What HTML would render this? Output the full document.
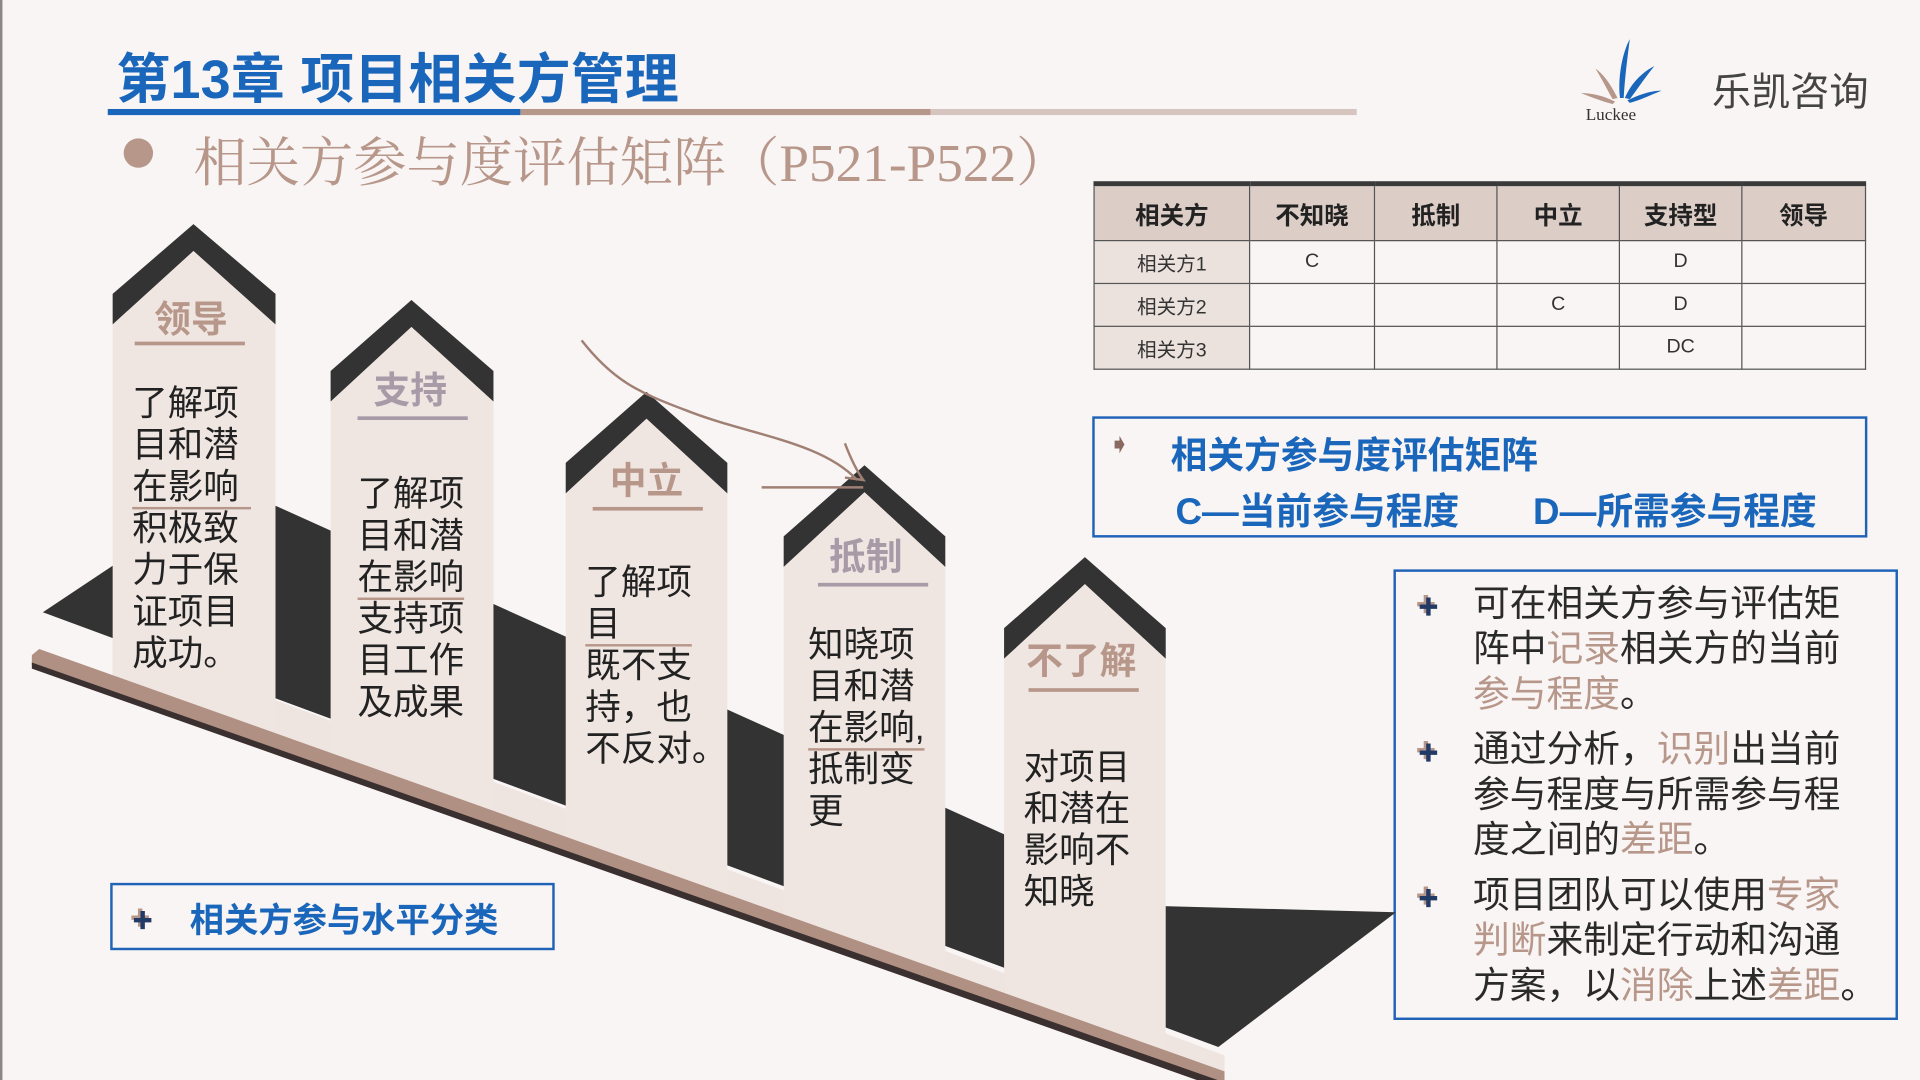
<!DOCTYPE html>
<html><head><meta charset="utf-8">
<style>
html,body{margin:0;padding:0;width:1920px;height:1080px;overflow:hidden;background:#f9f5f4;}
#s{position:absolute;left:0;top:0;width:1568px;height:882px;overflow:hidden;transform:scale(1.22449);transform-origin:0 0;font-family:"Liberation Sans","Noto Sans CJK SC",sans-serif;}
.a{position:absolute;white-space:nowrap;}
.title{left:95px;top:29px;font-size:44px;font-weight:bold;color:#1a66bb;letter-spacing:0.2px;}
.sub{left:158px;top:99px;font-size:43.5px;color:#b8978b;font-family:"Liberation Serif","Noto Serif CJK SC",serif;}
table{position:absolute;left:893px;top:148px;border-collapse:collapse;font-size:16px;color:#333;table-layout:fixed;width:630px;}
td{border:1px solid #555;text-align:center;height:34px;padding:0;}
tr.h td{height:44px;font-weight:bold;font-size:20px;background:#dccdc6;color:#222;border-top:4px solid #3a3a3a;}
td.f{background:#ece2dd;}
.box{position:absolute;border:2px solid #1f62b8;}
.blue{color:#1a66bb;font-weight:bold;}
.pt{position:absolute;font-size:29px;line-height:34px;color:#222;}
.lab{position:absolute;font-size:30px;font-weight:bold;color:#b8978b;}
.ul{position:absolute;height:3px;background:#b8978b;}
.rt{position:absolute;font-size:30px;line-height:37px;color:#2a2a2a;left:1203px;width:330px;}
.rt span{color:#b8978b;}
.ic{position:absolute;font-size:17px;color:#223a66;text-shadow:-2px -2px 0 #b8978b;}
</style></head><body><div id="s">
<div class="a title">第13章 项目相关方管理</div>
<div style="position:absolute;left:88px;top:89px;width:337px;height:5px;background:#1a66bb"></div>
<div style="position:absolute;left:425px;top:89px;width:335px;height:5px;background:#b8978b"></div>
<div style="position:absolute;left:760px;top:89px;width:348px;height:5px;background:#d6c5be"></div>
<div style="position:absolute;left:101px;top:113px;width:24px;height:24px;border-radius:50%;background:#b8978b"></div>
<div class="a sub">相关方参与度评估矩阵（P521-P522）</div>
<svg style="position:absolute;left:1285px;top:28px" width="80" height="75" viewBox="0 0 80 75">
<path d="M38 52 C36 35 40 15 46 4 C44 20 42 35 41 52Z" fill="#1a66bb"/>
<path d="M42 52 C48 38 58 30 66 26 C58 36 52 45 46 53Z" fill="#1a66bb"/>
<path d="M44 54 C56 48 66 46 72 46 C62 50 54 54 46 56Z" fill="#1a66bb"/>
<path d="M36 52 C30 40 24 32 18 28 C24 38 28 46 32 53Z" fill="#b8978b"/>
<path d="M34 55 C24 50 14 48 6 48 C16 52 24 55 32 57Z" fill="#b8978b"/>
<text x="10" y="70" font-size="14" fill="#333" font-family="Liberation Serif,serif">Luckee</text>
</svg>
<div class="a" style="left:1398px;top:50px;font-size:32px;color:#444">乐凯咨询</div>
<table>
<colgroup><col style="width:127px"><col style="width:102px"><col style="width:100px"><col style="width:100px"><col style="width:100px"><col style="width:101px"></colgroup>
<tr class="h"><td>相关方</td><td>不知晓</td><td>抵制</td><td>中立</td><td>支持型</td><td>领导</td></tr>
<tr><td class="f">相关方1</td><td>C</td><td></td><td></td><td>D</td><td></td></tr>
<tr><td class="f">相关方2</td><td></td><td></td><td>C</td><td>D</td><td></td></tr>
<tr><td class="f">相关方3</td><td></td><td></td><td></td><td>DC</td><td></td></tr>
</table>
<div class="box" style="left:892px;top:340px;width:629px;height:95px"></div>
<div class="a" style="left:905px;top:350px;font-size:22px;color:#8a6a60">➧</div>
<div class="a blue" style="left:956px;top:347px;font-size:30px">相关方参与度评估矩阵</div>
<div class="a blue" style="left:960px;top:393px;font-size:30px">C—当前参与程度</div>
<div class="a blue" style="left:1252px;top:393px;font-size:30px">D—所需参与程度</div>
<div class="box" style="left:1138px;top:465px;width:408px;height:364px"></div>
<div class="ic" style="left:1158px;top:482px">✚</div>
<div class="ic" style="left:1158px;top:601px">✚</div>
<div class="ic" style="left:1158px;top:720px">✚</div>
<div class="rt" style="top:475px">可在相关方参与评估矩<br>阵中<span>记录</span>相关方的当前<br><span>参与程度</span>。</div>
<div class="rt" style="top:594px">通过分析，<span>识别</span>出当前<br>参与程度与所需参与程<br>度之间的<span>差距</span>。</div>
<div class="rt" style="top:713px">项目团队可以使用<span>专家<br>判断</span>来制定行动和沟通<br>方案，以<span>消除</span>上述<span>差距</span>。</div>
<svg style="position:absolute;left:0;top:0" width="1568" height="882">
<polygon points="35,500 92,462 225,413 950,740 1140,745 995,855" fill="#333"/>
<polygon points="92,522 1000,862 1000,880 92,558" fill="#eee4e0"/>
<g>
<polygon points="92,240 158,183 225,240 225,265 158,205 92,265" fill="#333"/>
<polygon points="92,265 158,205 225,265 225,640 92,640" fill="#efe5e1"/>
<polygon points="270,303 336,245 403,303 403,328 336,267 270,328" fill="#333"/>
<polygon points="270,328 336,267 403,328 403,700 270,700" fill="#efe5e1"/>
<polygon points="462,378 528,320 594,378 594,403 528,342 462,403" fill="#333"/>
<polygon points="462,403 528,342 594,403 594,770 462,770" fill="#efe5e1"/>
<polygon points="640,438 706,380 772,438 772,463 706,402 640,463" fill="#333"/>
<polygon points="640,463 706,402 772,463 772,830 640,830" fill="#efe5e1"/>
<polygon points="820,513 886,455 952,513 952,538 886,477 820,538" fill="#333"/>
<polygon points="820,538 886,477 952,538 952,882 820,882" fill="#efe5e1"/>
</g>
<polygon points="10,538 1010,893 1010,882 0,882" fill="#f9f5f4"/>
<polygon points="26,535 32,530 1000,875 1000,887 26,543" fill="#b09082"/>
<polygon points="26,541 1000,884 1000,890 26,546" fill="#3a3030"/>
<path d="M475,278 C500,310 520,320 560,335 C610,355 670,360 700,392" stroke="#a08074" stroke-width="2" fill="none"/>
<path d="M690,362 C695,375 700,385 705,392 L690,390" stroke="#a08074" stroke-width="2" fill="none"/>
<path d="M622,398 L705,398" stroke="#a08074" stroke-width="2"/>
</svg>
<div style="position:absolute;left:0;top:0;width:2px;height:882px;background:#888"></div>
<div class="lab" style="left:126px;top:236px">领导</div><div class="ul" style="left:110px;top:279px;width:90px"></div>
<div class="lab" style="left:305px;top:294px;color:#a99aa8">支持</div><div class="ul" style="left:292px;top:340px;width:90px;background:#a99aa8"></div>
<div class="lab" style="left:498px;top:368px">中立</div><div class="ul" style="left:484px;top:414px;width:90px"></div>
<div class="lab" style="left:677px;top:430px;color:#a99aa8">抵制</div><div class="ul" style="left:668px;top:476px;width:90px;background:#a99aa8"></div>
<div class="lab" style="left:838px;top:515px">不了解</div><div class="ul" style="left:840px;top:562px;width:90px"></div>
<div class="pt" style="left:108px;top:313px">了解项<br><span>目和潜</span><br><span style="border-bottom:2px solid #b8978b;padding-right:10px">在影响</span><br>积极致<br>力于保<br>证项目<br>成功。</div>
<div class="pt" style="left:292px;top:387px">了解项<br>目和潜<br><span style="border-bottom:2px solid #b8978b">在影响</span><br>支持项<br>目工作<br>及成果</div>
<div class="pt" style="left:478px;top:459px">了解项<br><span style="border-bottom:2px solid #b8978b;padding-right:58px">目</span><br>既不支<br>持，也<br>不反对。</div>
<div class="pt" style="left:660px;top:510px">知晓项<br>目和潜<br><span style="border-bottom:2px solid #b8978b">在影响,</span><br>抵制变<br>更</div>
<div class="pt" style="left:836px;top:610px">对项目<br>和潜在<br>影响不<br>知晓</div>
<div class="box" style="left:90px;top:721px;width:359px;height:51px;background:#f9f5f4"></div>
<div class="ic" style="left:108px;top:738px">✚</div>
<div class="a blue" style="left:155px;top:730px;font-size:28px">相关方参与水平分类</div>
</div></body></html>
